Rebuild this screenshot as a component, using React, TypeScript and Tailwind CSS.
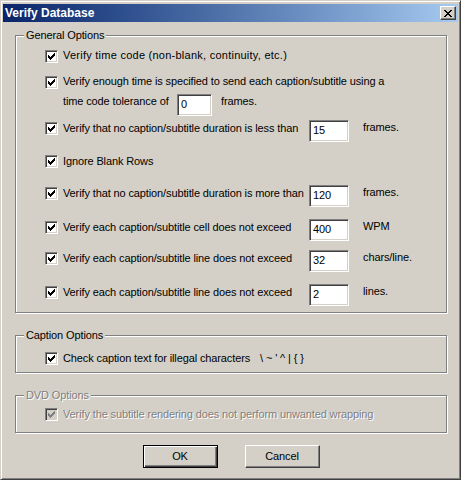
import React from 'react';

const font = "font-['Liberation_Sans',Arial,sans-serif]";

const Check: React.FC<{ disabled?: boolean }> = ({ disabled }) => (
  <span
    className={`flex h-[13px] w-[13px] shrink-0 items-center justify-center border border-t-[#808080] border-l-[#808080] border-r-white border-b-white shadow-[inset_1px_1px_0_#404040,inset_-1px_-1px_0_#d4d0c8] ${
      disabled ? 'bg-[#d4d0c8]' : 'bg-white'
    }`}
  >
    <svg width="7" height="7" viewBox="0 0 7 7" shapeRendering="crispEdges">
      <path
        d="M0 2h1v3H0z M1 3h1v3H1z M2 4h1v3H2z M3 3h1v3H3z M4 2h1v3H4z M5 1h1v3H5z M6 0h1v3H6z"
        fill={disabled ? '#808080' : '#000'}
      />
    </svg>
  </span>
);

const Field: React.FC<{ value: string; w?: string }> = ({ value, w = 'w-[40px]' }) => (
  <div
    className={`${w} h-[22px] shrink-0 bg-white border border-t-[#808080] border-l-[#808080] border-r-white border-b-white shadow-[inset_1px_1px_0_#404040,inset_-1px_-1px_0_#d4d0c8] pl-[3px] pt-[3px] text-[11px] leading-[13px] text-black`}
  >
    {value}
  </div>
);

const Group: React.FC<{
  title: string;
  h: string;
  mt: string;
  disabled?: boolean;
  children: React.ReactNode;
}> = ({ title, h, mt, disabled, children }) => (
  <div
    className={`relative ml-[12px] w-[432px] ${h} ${mt} border border-[#808080] shadow-[inset_1px_1px_0_#fff,1px_1px_0_#fff]`}
  >
    <span
      className={`absolute -top-[7px] left-[8px] bg-[#d4d0c8] px-[2px] text-[11px] leading-[13px] ${
        disabled ? 'text-[#808080] [text-shadow:1px_1px_0_#fff]' : 'text-black'
      }`}
    >
      {title}
    </span>
    {children}
  </div>
);

const rows = [
  { mt: 'mt-[4px]', label: 'Verify that no caption/subtitle duration is less than', value: '15', unit: 'frames.' },
  { mt: 'mt-[11px]', label: 'Ignore Blank Rows' },
  { mt: 'mt-[10px]', label: 'Verify that no caption/subtitle duration is more than', value: '120', unit: 'frames.' },
  { mt: 'mt-[12px]', label: 'Verify each caption/subtitle cell does not exceed', value: '400', unit: 'WPM' },
  { mt: 'mt-[9px]', label: 'Verify each caption/subtitle line does not exceed', value: '32', unit: 'chars/line.' },
  { mt: 'mt-[12px]', label: 'Verify each caption/subtitle line does not exceed', value: '2', unit: 'lines.' },
];

export default function App() {
  return (
    <div
      className={`${font} flex h-[480px] w-[461px] flex-col bg-[#d4d0c8] border border-[#d4d0c8] border-r-[#404040] border-b-[#404040] shadow-[inset_1px_1px_0_#fff,inset_-1px_-1px_0_#808080] px-[2px] pt-[3px] text-[11px] leading-[13px] tracking-[-0.12px] text-black select-none`}
    >
      {/* title bar */}
      <div className="flex h-[18px] items-center justify-between bg-gradient-to-r from-[#0a246a] to-[#a6caf0] pl-[2px] pr-[2px]">
        <span className="text-[12px] font-bold leading-[13px] tracking-normal text-white">Verify Database</span>
        <button className="flex h-[14px] w-[16px] items-center justify-center bg-[#d4d0c8] border border-t-white border-l-white border-r-[#404040] border-b-[#404040] shadow-[inset_-1px_-1px_0_#808080]">
          <svg width="8" height="7" viewBox="0 0 8 7" shapeRendering="crispEdges">
            <path
              d="M0 0h2v1H0z M6 0h2v1H6z M1 1h2v1H1z M5 1h2v1H5z M2 2h4v1H2z M3 3h2v1H3z M2 4h4v1H2z M1 5h2v1H1z M5 5h2v1H5z M0 6h2v1H0z M6 6h2v1H6z"
              fill="#000"
            />
          </svg>
        </button>
      </div>

      <Group title="General Options" h="h-[278px]" mt="mt-[13px]">
        <div className="flex flex-col pl-[29px]">
          <div className="mt-[12px] flex h-[22px] items-start gap-[5px]">
            <span className="mt-[2px]"><Check /></span>
            <span className="mt-[1px] whitespace-nowrap tracking-[0.25px]">Verify time code (non-blank, continuity, etc.)</span>
          </div>
          <div className="mt-[4px] flex h-[16px] items-start gap-[5px]">
            <span className="mt-[2px]"><Check /></span>
            <span className="mt-[1px] whitespace-nowrap">
              Verify enough time is specified to send each caption/subtitle using a
            </span>
          </div>
          <div className="mt-[4px] flex h-[22px] items-start pl-[18px]">
            <span className="mt-[1px] w-[114px] whitespace-nowrap">time code tolerance of</span>
            <Field value="0" w="w-[35px]" />
            <span className="ml-[9px] mt-[1px]">frames.</span>
          </div>
          {rows.map((r, i) => (
            <div key={i} className={`${r.mt} flex h-[22px] items-start`}>
              <span className="mt-[2px]"><Check /></span>
              <span className="ml-[5px] mt-[2px] w-[246px] whitespace-nowrap">{r.label}</span>
              {r.value && <Field value={r.value} />}
              {r.unit && <span className="ml-[14px] mt-[1px] whitespace-nowrap">{r.unit}</span>}
            </div>
          ))}
        </div>
      </Group>

      <Group title="Caption Options" h="h-[38px]" mt="mt-[22px]">
        <div className="mt-[16px] flex items-center gap-[5px] pl-[29px]">
          <Check />
          <span className="whitespace-nowrap">Check caption text for illegal characters</span>
          <span className="ml-[5px] whitespace-nowrap">\ ~ ' ^ | {'{'} {'}'}</span>
        </div>
      </Group>

      <Group title="DVD Options" h="h-[38px]" mt="mt-[22px]" disabled>
        <div className="mt-[12px] flex items-center gap-[5px] pl-[29px]">
          <Check disabled />
          <span className="whitespace-nowrap text-[#808080] [text-shadow:1px_1px_0_#fff]">
            Verify the subtitle rendering does not perform unwanted wrapping
          </span>
        </div>
      </Group>

      <div className="mt-[12px] flex justify-center gap-[27px] pl-[1px]">
        <button className="h-[23px] w-[75px] bg-[#d4d0c8] border border-black shadow-[inset_1px_1px_0_#fff,inset_-1px_-1px_0_#404040,inset_-2px_-2px_0_#808080] text-[11px] leading-[13px] text-black">
          OK
        </button>
        <button className="h-[23px] w-[75px] bg-[#d4d0c8] border border-t-white border-l-white border-r-[#404040] border-b-[#404040] shadow-[inset_-1px_-1px_0_#808080] text-[11px] leading-[13px] text-black">
          Cancel
        </button>
      </div>
    </div>
  );
}
